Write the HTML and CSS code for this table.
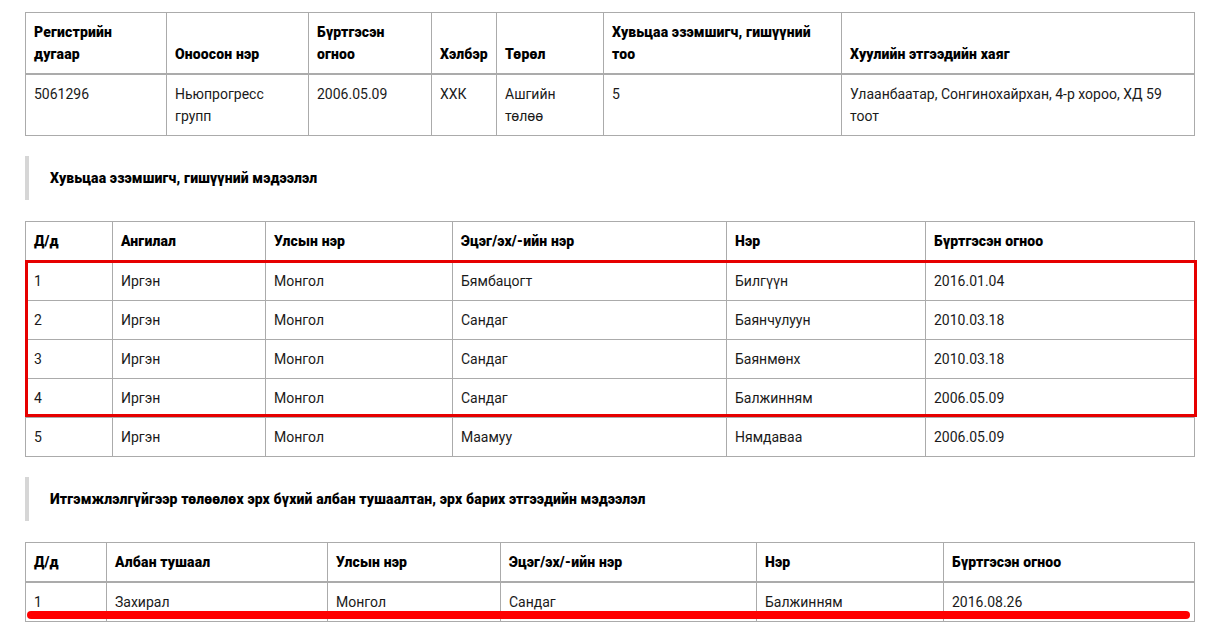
FILE: index.html
```html
<!DOCTYPE html>
<html lang="mn">
<head>
<meta charset="utf-8">
<title>Компанийн мэдээлэл</title>
<link rel="stylesheet" href="styles.css">
</head>
<body>
<div class="page">
  <table class="grid t1">
    <colgroup>
      <col class="c141"><col class="c142"><col class="c123"><col class="c65"><col class="c107"><col class="c238"><col>
    </colgroup>
    <thead>
      <tr>
        <th>Регистрийн дугаар</th>
        <th>Оноосон нэр</th>
        <th>Бүртгэсэн огноо</th>
        <th>Хэлбэр</th>
        <th>Төрөл</th>
        <th>Хувьцаа эзэмшигч, гишүүний тоо</th>
        <th>Хуулийн этгээдийн хаяг</th>
      </tr>
    </thead>
    <tbody>
      <tr>
        <td>5061296</td>
        <td>Ньюпрогресс групп</td>
        <td>2006.05.09</td>
        <td>ХХК</td>
        <td>Ашгийн төлөө</td>
        <td>5</td>
        <td>Улаанбаатар, Сонгинохайрхан, 4-р хороо, ХД 59 тоот</td>
      </tr>
    </tbody>
  </table>

  <div class="section-title">Хувьцаа эзэмшигч, гишүүний мэдээлэл</div>

  <div class="table-wrap">
    <table class="grid">
      <colgroup>
        <col class="c87"><col class="c153"><col class="c187"><col class="c274"><col class="c199"><col>
      </colgroup>
      <thead>
        <tr>
          <th>Д/д</th>
          <th>Ангилал</th>
          <th>Улсын нэр</th>
          <th>Эцэг/эх/-ийн нэр</th>
          <th>Нэр</th>
          <th>Бүртгэсэн огноо</th>
        </tr>
      </thead>
      <tbody>
        <tr><td>1</td><td>Иргэн</td><td>Монгол</td><td>Бямбацогт</td><td>Билгүүн</td><td>2016.01.04</td></tr>
        <tr><td>2</td><td>Иргэн</td><td>Монгол</td><td>Сандаг</td><td>Баянчулуун</td><td>2010.03.18</td></tr>
        <tr><td>3</td><td>Иргэн</td><td>Монгол</td><td>Сандаг</td><td>Баянмөнх</td><td>2010.03.18</td></tr>
        <tr><td>4</td><td>Иргэн</td><td>Монгол</td><td>Сандаг</td><td>Балжинням</td><td>2006.05.09</td></tr>
        <tr><td>5</td><td>Иргэн</td><td>Монгол</td><td>Маамуу</td><td>Нямдаваа</td><td>2006.05.09</td></tr>
      </tbody>
    </table>
    <div class="mark-box"></div>
  </div>

  <div class="section-title">Итгэмжлэлгүйгээр төлөөлөх эрх бүхий албан тушаалтан, эрх барих этгээдийн мэдээлэл</div>

  <div class="table-wrap">
    <table class="grid">
      <colgroup>
        <col class="c81"><col class="c221"><col class="c173"><col class="c256"><col class="c187"><col>
      </colgroup>
      <thead>
        <tr>
          <th>Д/д</th>
          <th>Албан тушаал</th>
          <th>Улсын нэр</th>
          <th>Эцэг/эх/-ийн нэр</th>
          <th>Нэр</th>
          <th>Бүртгэсэн огноо</th>
        </tr>
      </thead>
      <tbody>
        <tr><td>1</td><td>Захирал</td><td>Монгол</td><td>Сандаг</td><td>Балжинням</td><td>2016.08.26</td></tr>
      </tbody>
    </table>
    <div class="mark-line"></div>
  </div>
</div>
</body>
</html>
```

FILE: styles.css
```css
html, body {
  margin: 0;
  padding: 0;
  background: #ffffff;
}

body {
  font-family: Roboto, "Liberation Sans", Arial, sans-serif;
  font-size: 14px;
  color: #222222;
}

.page {
  width: 1170px;
  padding: 12px 0 0 25px;
  display: flex;
  flex-direction: column;
}

.grid {
  width: 1170px;
  table-layout: fixed;
  border-collapse: collapse;
  border: 1px solid #ababab;
}

.grid th,
.grid td {
  border: 1px solid #ababab;
  padding: 8px 8px 8px 8px;
  line-height: 22px;
  text-align: left;
  vertical-align: top;
}

.grid th {
  font-weight: 900;
  letter-spacing: 0.15px;
  color: #000000;
  vertical-align: bottom;
}

.grid thead tr th {
  border-bottom: 2px solid #ababab;
}

.grid td {
  font-weight: 400;
  color: #1a1a1a;
}

.c141 { width: 141px; }
.c142 { width: 142px; }
.c123 { width: 123px; }
.c65 { width: 65px; }
.c107 { width: 107px; }
.c238 { width: 238px; }

.c87 { width: 87px; }
.c153 { width: 153px; }
.c187 { width: 187px; }
.c274 { width: 274px; }
.c199 { width: 199px; }

.c81 { width: 81px; }
.c221 { width: 221px; }
.c173 { width: 173px; }
.c256 { width: 256px; }

.section-title {
  margin: 20px 0 21px 0;
  height: 44px;
  display: flex;
  align-items: center;
  border-left: 4px solid #d6d6d6;
  padding-left: 21px;
  font-weight: 900;
  letter-spacing: 0.15px;
  color: #000000;
  font-size: 14px;
}

.table-wrap {
  position: relative;
}

.mark-box {
  position: absolute;
  left: 0;
  top: 39px;
  width: 1166px;
  height: 151px;
  border: 3px solid #e60000;
}

.mark-line {
  position: absolute;
  left: 2px;
  top: 69px;
  width: 1163px;
  height: 8px;
  border-radius: 4px;
  background: #ff0000;
}
```
